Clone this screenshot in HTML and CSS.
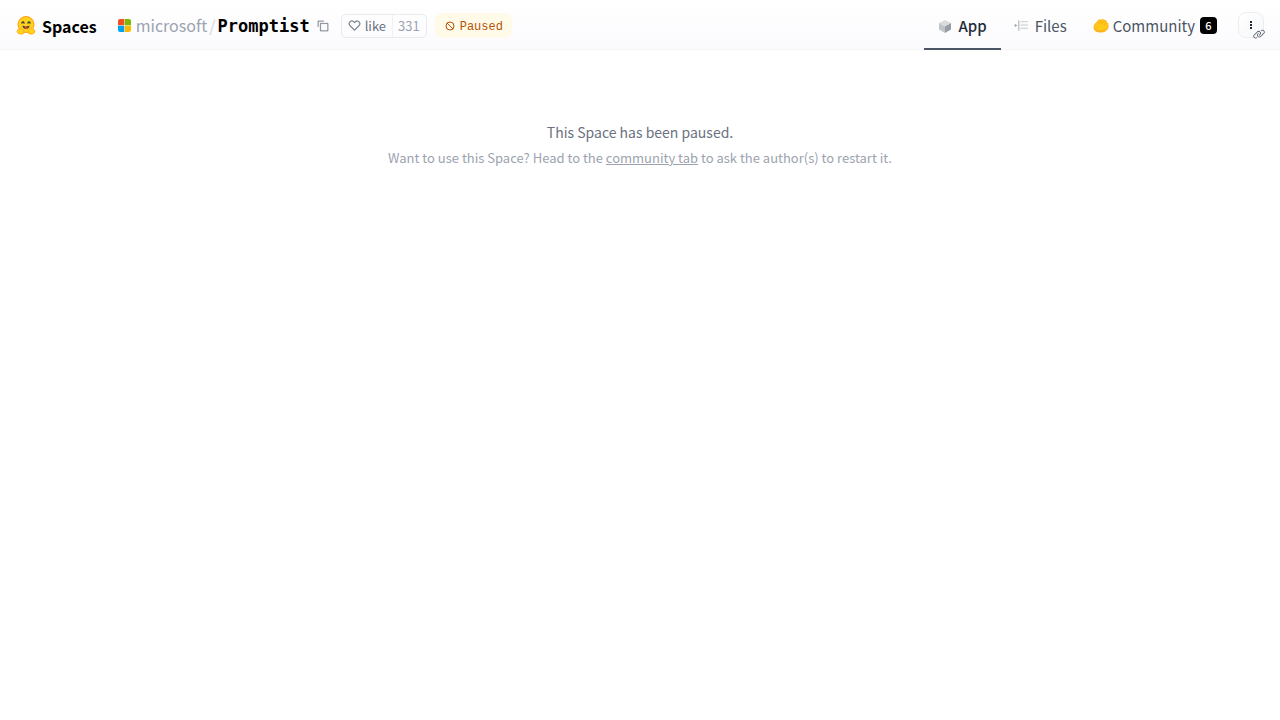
FILE: index.html
```html
<!DOCTYPE html>
<html lang="en">
<head>
<meta charset="utf-8">
<meta name="viewport" content="width=device-width, initial-scale=1">
<title>Promptist - a Space by microsoft</title>
<link rel="stylesheet" href="styles.css">
</head>
<body>
<header class="header">
  <div class="identity">
    <a class="brand" href="#">
      <svg class="brand-logo" viewBox="0 0 40 38" aria-hidden="true">
        <circle cx="20" cy="17" r="16" fill="#ffd21e" stroke="#ff9d0b" stroke-width="2"/>
        <path d="M15 35c2-4 0-8-4-10-1-2-3-2-3 1-2-1-4 0-3 2-3 0-4 2-2 4-1 3 7 6 12 3zM25 35c-2-4 0-8 4-10 1-2 3-2 3 1 2-1 4 0 3 2 3 0 4 2 2 4 1 3-7 6-12 3z" fill="#ffd21e" stroke="#ffb01a" stroke-width="2"/>
        <path d="M12 14q2-4 4 0M24 14q2-4 4 0" fill="none" stroke="#3a3b45" stroke-width="3" stroke-linecap="round"/>
        <path d="M13 19q7 4 14 0c0 4-3 7-7 7s-7-3-7-7z" fill="#3a3b45"/>
        <path d="M16 24q4-4 8 0-4 4-8 0z" fill="#f94040"/>
      </svg>
      <span>Spaces</span>
    </a>
    <div class="repo">
      <svg class="owner-logo" viewBox="0 0 26 26" aria-hidden="true">
        <path d="M4 0h8.500v12.500H0V4a4 4 0 0 1 4-4z" fill="#f15022"/>
        <path d="M13.500 0H22a4 4 0 0 1 4 4v8.500H13.500z" fill="#7eb900"/>
        <path d="M0 13.500h12.500V26H4a4 4 0 0 1-4-4z" fill="#00a3ee"/>
        <path d="M13.500 13.500H26V22a4 4 0 0 1-4 4h-8.500z" fill="#ffb800"/>
      </svg>
      <div class="path">
        <a class="owner" href="#">microsoft</a>
        <span class="slash">/</span>
        <a class="name" href="#">Promptist</a>
      </div>
      <button class="copy" type="button" aria-label="Copy space name">
        <svg viewBox="0 0 32 32" aria-hidden="true"><path d="M28 10v18H10V10h18m0-2H10a2 2 0 0 0-2 2v18a2 2 0 0 0 2 2h18a2 2 0 0 0 2-2V10a2 2 0 0 0-2-2zM4 18H2V4a2 2 0 0 1 2-2h14v2H4z" fill="currentColor" stroke="currentColor" stroke-width=".6"/></svg>
      </button>
    </div>
    <div class="like">
      <button class="like-button" type="button">
        <svg viewBox="0 0 32 32" aria-hidden="true"><path d="M22.450 6a5.470 5.470 0 0 1 3.910 1.640 5.700 5.700 0 0 1 0 8L16 26.130 5.640 15.640a5.700 5.700 0 0 1 0-8 5.480 5.480 0 0 1 7.820 0L16 10.240l2.530-2.580A5.440 5.440 0 0 1 22.450 6m0-2a7.470 7.470 0 0 0-5.340 2.240L16 7.360l-1.110-1.120a7.490 7.490 0 0 0-10.680 0 7.720 7.720 0 0 0 0 10.820L16 29l11.790-11.940a7.720 7.720 0 0 0 0-10.820A7.490 7.490 0 0 0 22.450 4z" fill="currentColor" stroke="currentColor" stroke-width=".6"/></svg>
        <span>like</span>
      </button>
      <button class="like-count" type="button">331</button>
    </div>
    <div class="status">
      <svg viewBox="0 0 12 12" fill="none" stroke="currentColor" aria-hidden="true"><circle cx="6" cy="6" r="4"/><path d="M3 3l6 6"/></svg>
      <span>Paused</span>
    </div>
  </div>
  <nav class="tabs" aria-label="Space">
    <a class="tab tab-active" href="#" aria-current="page">
      <svg class="tab-icon" viewBox="0 0 12 14" aria-hidden="true"><path d="M6 1l6 3-6 3.500L0 4z" fill="#d9dcdf"/><path d="M0 4l6 3.500V14l-6-3.500z" fill="#bfc4c9"/><path d="M12 4L6 7.500V14l6-3.500z" fill="#969da4"/></svg>
      <span>App</span>
    </a>
    <a class="tab" href="#">
      <svg class="files-icon" viewBox="0 0 14 12" fill="none" aria-hidden="true"><path d="M0 6h3M1.500 4.500v3" stroke="#aab0b8"/><path d="M4.500 1v10" stroke="#aab0b8"/><path d="M6 2.500h7M6 5.500h7M6 8.500h7" stroke="#c4c9cf"/></svg>
      <span>Files</span>
    </a>
    <a class="tab" href="#">
      <svg class="hand-icon" viewBox="0 0 32 30" aria-hidden="true"><path d="M2 19c0-6 4-9 8-13 1-3 4-3 6-1 1-3 5-3 6 0 3-1 5 1 5 4 3 1 3 3 3 6 1 8-5 13-14 13C8 28 2 26 2 19z" fill="#ffc91a" stroke="#ffad1a" stroke-width="2"/><path d="M10 13l6-7M16 12l5-5M23 13l3-3M4 22c4 5 13 6 20 1" fill="none" stroke="#ff9d0b" stroke-width="1.500" stroke-linecap="round"/></svg>
      <span>Community</span>
      <span class="badge">6</span>
    </a>
    <div class="more">
      <button class="more-button" type="button" aria-label="More options">
        <svg viewBox="0 0 10 10" aria-hidden="true"><path d="M4 1h2v2H4zM4 4h2v2H4zM4 7h2v2H4z" fill="currentColor"/></svg>
      </button>
      <svg class="link-icon" viewBox="0 0 32 32" fill="currentColor" aria-hidden="true"><path d="M29.250 6.760a6 6 0 0 0-8.500 0l1.420 1.420a4 4 0 1 1 5.670 5.670l-8 8a4 4 0 1 1-5.670-5.660l1.410-1.420-1.410-1.420-1.420 1.420a6 6 0 0 0 0 8.500A6 6 0 0 0 17 25a6 6 0 0 0 4.270-1.760l8-8a6 6 0 0 0-.02-8.480z"/><path d="M4.190 24.820a4 4 0 0 1 0-5.670l8-8a4 4 0 0 1 5.670 0A3.940 3.940 0 0 1 19 14a4 4 0 0 1-1.170 2.850L15.710 19l1.420 1.420 2.120-2.120a6 6 0 0 0-8.510-8.510l-8 8a6 6 0 0 0 0 8.510A6 6 0 0 0 7 28a6.070 6.070 0 0 0 4.280-1.760l-1.420-1.420a4 4 0 0 1-5.670 0z"/></svg>
    </div>
  </nav>
</header>
<main class="notice">
  <p class="notice-title">This Space has been paused.</p>
  <p class="notice-text">Want to use this Space? Head to the <a href="#">community tab</a> to ask the author(s) to restart it.</p>
</main>
</body>
</html>
```

FILE: styles.css
```css
* { box-sizing: border-box; }

body {
  margin: 0;
  background: #fff;
  color: #000;
  font-family: "Noto Sans CJK SC", "Noto Sans", sans-serif;
  font-size: 15px;
  line-height: 24px;
}

a { color: inherit; text-decoration: none; }

button {
  padding: 0;
  border: 0;
  background: none;
  color: inherit;
  font: inherit;
}

svg { display: block; flex: none; }

.header {
  display: flex;
  justify-content: space-between;
  height: 50px;
  padding: 0 16px;
  background: linear-gradient(to bottom, #fff, #fbfbfe);
  box-shadow: inset 0 -1px #f5f6f8;
}

.identity, .brand, .repo, .tabs, .tab { display: flex; align-items: center; }
.identity { padding-top: 1px; }

.brand { gap: 6px; margin-right: 21px; font-size: 16px; font-weight: 700; }
.brand-logo { width: 20px; height: 19px; }

.repo { font-size: 16px; }
.path { display: flex; align-items: baseline; }
.owner-logo { width: 13px; height: 13px; margin-right: 5px; }
.owner { color: #9ca3af; }
.slash { margin: 0 2px; color: #d1d5db; }
.name {
  font-family: "DejaVu Sans Mono", monospace;
  font-size: 17px;
  font-weight: 700;
}
.copy { margin: 0 12px 0 7px; color: #7b828d; }
.copy svg { width: 12px; height: 12px; }

.like {
  display: flex;
  height: 24px;
  border: 1px solid #e8eaee;
  border-radius: 5px;
  color: #6b7280;
  font-size: 13px;
  line-height: 22px;
}
.like-button { display: flex; align-items: center; gap: 4px; padding: 0 6px; }
.like-button svg { width: 13px; height: 13px; }
.like-count { padding: 0 6px 0 5px; border-left: 1px solid #eef0f3; color: #9ca3af; }

.status {
  display: flex;
  align-items: center;
  gap: 4px;
  height: 25px;
  margin-left: 8px;
  padding: 0 9px;
  border-radius: 7px;
  background: #fffbe8;
  color: #b45309;
  font-family: "Liberation Mono", monospace;
  font-size: 12px;
}
.status svg { width: 12px; height: 12px; }
.status span { padding-top: 2px; }

.tabs { align-items: stretch; color: #4b5563; }
.tab { height: 50px; padding: 3px 13px 0; border-bottom: 2px solid transparent; }
.tab-active { padding: 3px 14px 0; border-color: #4b5563; color: #1f2937; font-weight: 500; }
.tab-icon { width: 14px; height: 14px; margin-right: 6px; }
.files-icon { width: 15px; height: 13px; margin-right: 6px; }
.hand-icon { width: 16px; height: 15px; margin-right: 4px; }
.badge {
  width: 17px;
  height: 17px;
  margin-left: 5px;
  border-radius: 4px;
  background: #000;
  color: #fff;
  font-size: 11px;
  font-weight: 500;
  line-height: 17px;
  text-align: center;
}

.more { position: relative; align-self: center; margin-left: 8px; }
.more-button {
  display: grid;
  place-items: center;
  width: 26px;
  height: 26px;
  border: 1px solid #eceef2;
  border-radius: 8px;
  background: linear-gradient(to bottom right, #fff, #f6f7f9);
  color: #1f2937;
}
.more-button svg { width: 10px; height: 10px; }
.link-icon {
  position: absolute;
  right: -1px;
  bottom: -2px;
  width: 12px;
  height: 12px;
  color: #4b5563;
}

.notice { padding: 70px 16px 0; text-align: center; }
.notice p { margin: 0; }
.notice-title { color: #6b7280; font-size: 14px; line-height: 24px; }
.notice-text { color: #9ca3af; font-size: 13px; line-height: 27px; }
.notice-text a { text-decoration: underline; }
```
